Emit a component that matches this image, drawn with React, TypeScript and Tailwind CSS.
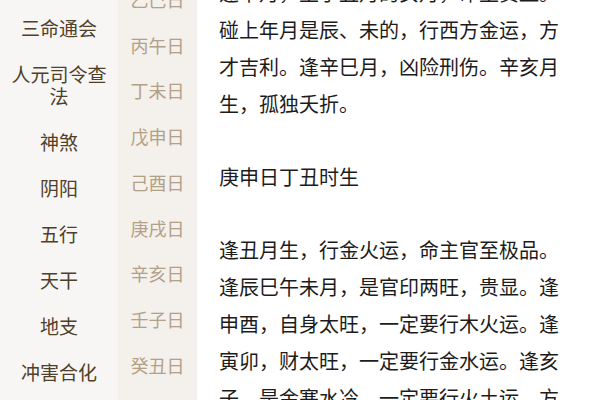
import React from "react";

const leftItems = ["三命通会", "人元司令查法", "神煞", "阴阳", "五行", "天干", "地支", "冲害合化"];
const midItems = ["乙巳日", "丙午日", "丁未日", "戊申日", "己酉日", "庚戌日", "辛亥日", "壬子日", "癸丑日"];

const paragraphs = [
  "逢午月，生于丑月的亥月，命主贵显。碰上年月是辰、未的，行西方金运，方才吉利。逢辛巳月，凶险刑伤。辛亥月生，孤独夭折。",
  "庚申日丁丑时生",
  "逢丑月生，行金火运，命主官至极品。逢辰巳午未月，是官印两旺，贵显。逢申酉，自身太旺，一定要行木火运。逢寅卯，财太旺，一定要行金水运。逢亥子，是金寒水冷，一定要行火土运，方才吉利。",
];

export default function App() {
  return (
    <div
      className="w-[600px] h-[400px] overflow-hidden flex bg-white"
      style={{ fontFamily: '"Noto Sans CJK SC", "Noto Sans", sans-serif' }}
    >
      <div className="w-[118px] shrink-0 bg-[#f7f6f4] pt-[5px] px-[4px] flex flex-col">
        {leftItems.map((t) => (
          <div key={t} className="py-[12px] text-center text-[19px] leading-[22px] text-[#4f402a]">
            {t}
          </div>
        ))}
      </div>
      <div className="w-[79px] shrink-0 bg-[#f4f0eb] flex flex-col">
        <div className="mt-[-23.7px] flex flex-col">
          {midItems.map((t) => (
            <div key={t} className="h-[45.8px] shrink-0 flex items-center justify-center text-[18px] text-[#b3a088]">
              {t}
            </div>
          ))}
        </div>
      </div>
      <div className="flex-1 pl-[22px] pr-[30px]">
        <div className="mt-[-26px] w-[346px] text-[20px] leading-[37px] text-[#1c1c1c]">
          {paragraphs.map((p, i) => (
            <p key={i} className="mb-[36px]">
              {p}
            </p>
          ))}
        </div>
      </div>
    </div>
  );
}
